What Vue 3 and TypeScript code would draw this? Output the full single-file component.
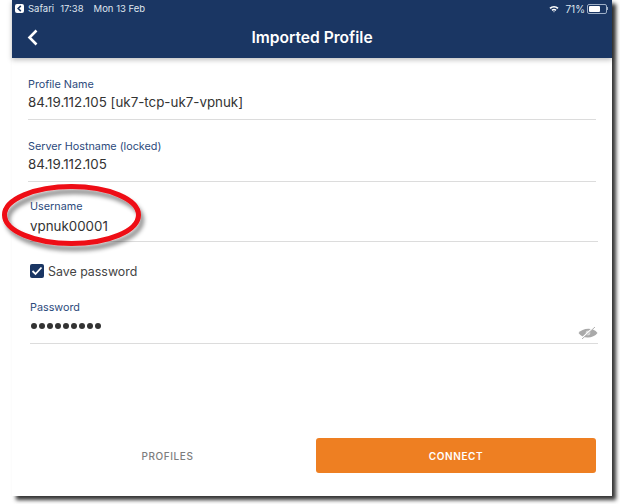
<script setup lang="ts">
const fields = [
  { label: 'Profile Name', value: '84.19.112.105 [uk7-tcp-uk7-vpnuk]' },
  { label: 'Server Hostname (locked)', value: '84.19.112.105' },
]
</script>

<template>
  <div class="stage">
    <div class="window">
      <header class="header">
        <div class="status">
          <div class="status-left">
            <span class="back-badge">
              <svg width="7" height="7" viewBox="0 0 8 8"><path d="M5.5 1 L2.5 4 L5.5 7" fill="none" stroke="#1a3663" stroke-width="1.8" /></svg>
            </span>
            <span>Safari</span><span class="time">17:38</span><span class="date">Mon 13 Feb</span>
          </div>
          <div class="status-right">
            <svg width="10" height="8" viewBox="0 0 12 9" class="wifi">
              <path d="M0.5 3 A8 8 0 0 1 11.5 3 L10 4.6 A6 6 0 0 0 2 4.6 Z M3 5.4 A4.5 4.5 0 0 1 9 5.4 L7.7 6.8 A2.6 2.6 0 0 0 4.3 6.8 Z M5 7.6 A1.5 1.5 0 0 1 7 7.6 L6 8.7 Z" fill="#fff" />
            </svg>
            <span class="pct">71%</span>
            <span class="battery"><span class="battery-fill"></span></span>
            <span class="nub"></span>
          </div>
        </div>
        <div class="nav">
          <svg class="chev" width="12" height="17" viewBox="0 0 12 17"><path d="M9.5 1.5 L2.5 8.5 L9.5 15.5" fill="none" stroke="#fff" stroke-width="2.6" /></svg>
          <h1 class="title">Imported Profile</h1>
        </div>
      </header>

      <main class="form">
        <div class="upper">
          <div v-for="f in fields" :key="f.label" class="field">
            <div class="label">{{ f.label }}</div>
            <div class="value">{{ f.value }}</div>
          </div>
        </div>
        <div class="lower">
          <div class="field">
            <div class="label">Username</div>
            <div class="value tall">vpnuk00001</div>
          </div>
          <div class="check-row">
            <span class="check">
              <svg width="12" height="10" viewBox="0 0 12 10"><path d="M1.5 5 L4.5 8 L10.5 1.5" fill="none" stroke="#fff" stroke-width="1.8" /></svg>
            </span>
            <span>Save password</span>
          </div>
          <div class="field pw">
            <div class="label">Password</div>
            <div class="dots">
              <span class="dot-row"><i v-for="n in 9" :key="n" class="dot"></i></span>
              <svg class="eye" width="20" height="12" viewBox="0 0 20 12">
                <path d="M0.5 6 C4 1 15 -0.5 19.5 6 C15.5 11.5 5 12.5 0.5 6 Z" fill="#a9a9a9" />
                <circle cx="10" cy="6" r="2.4" fill="#d8d8d8" />
                <path d="M3 12 L16 0" stroke="#fff" stroke-width="1.6" />
                <path d="M4 12 L17 0" stroke="#a9a9a9" stroke-width="0.9" />
              </svg>
            </div>
          </div>
        </div>
        <div class="actions">
          <button class="btn ghost" type="button">PROFILES</button>
          <button class="btn primary" type="button">CONNECT</button>
        </div>
      </main>
    </div>

    <svg class="ring" width="156" height="90" viewBox="0 0 156 90">
      <defs>
        <filter id="ring-shadow" x="-10%" y="-15%" width="125%" height="140%">
          <feDropShadow dx="3" dy="5" stdDeviation="2" flood-color="#000" flood-opacity="0.45" />
        </filter>
      </defs>
      <ellipse cx="71.5" cy="44" rx="67" ry="28.5" fill="none" stroke="#ee0a12" stroke-width="5" filter="url(#ring-shadow)" />
    </svg>
  </div>
</template>

<style>
html, body { margin: 0; background: #fff; }
</style>

<style scoped>
.stage {
  position: relative;
  width: 620px;
  height: 504px;
  overflow: hidden;
  background: #fff;
  font-family: Inter, "Liberation Sans", sans-serif;
}
.window {
  margin-left: 12px;
  width: 600px;
  height: 496px;
  display: flex;
  flex-direction: column;
  background: #fff;
  box-shadow: 4px 4px 4px rgba(0, 0, 0, 0.8);
}
.header {
  height: 58px;
  background: #1a3663;
  color: #fff;
  box-shadow: 0 2px 5px rgba(0, 0, 0, 0.25);
  flex: none;
}
.status {
  height: 17px;
  display: flex;
  justify-content: space-between;
  align-items: center;
  padding: 0 4px 0 3px;
  font-size: 9.5px;
  color: #dfe5ee;
}
.status-left, .status-right { display: flex; align-items: center; }
.back-badge {
  width: 9px;
  height: 9px;
  margin-right: 4px;
  border-radius: 2px;
  background: #fff;
  display: flex;
  align-items: center;
  justify-content: center;
}
.time { margin-left: 6px; }
.date { margin-left: 10px; }
.wifi { margin-right: 6px; }
.pct { font-size: 10px; margin-right: 2px; }
.battery {
  width: 16px;
  height: 6px;
  padding: 1px;
  border: 1px solid #9fb0c8;
  border-radius: 2px;
  display: block;
}
.battery-fill { display: block; width: 71%; height: 100%; background: #fff; border-radius: 1px; }
.nub { width: 1px; height: 3px; background: #9fb0c8; }
.nav {
  position: relative;
  height: 40px;
  display: flex;
  align-items: center;
  justify-content: center;
}
.chev { position: absolute; left: 15px; top: 12px; }
.title { margin: 0; font-size: 15.6px; font-weight: 600; }
.form { flex: 1; display: flex; flex-direction: column; color: #333; }
.upper { padding: 20px 16px 0 16px; display: flex; flex-direction: column; gap: 20px; }
.lower { padding: 18px 14px 0 18px; display: flex; flex-direction: column; }
.field { border-bottom: 1px solid #dcdcdc; height: 41px; }
.label { font-size: 10.8px; line-height: 13px; color: #2c4a7c; }
.value { font-size: 13.35px; line-height: 22px; color: #333; }
.value.tall { line-height: 26px; }
.check-row {
  margin-top: 20px;
  display: flex;
  align-items: center;
  gap: 4px;
  font-size: 12.4px;
  height: 18px;
  color: #444;
}
.check {
  width: 14px;
  height: 14px;
  border-radius: 2px;
  background: #1a3663;
  display: flex;
  align-items: center;
  justify-content: center;
}
.field.pw { margin-top: 21px; height: 42px; }
.dots { display: flex; align-items: center; justify-content: space-between; height: 24px; }
.dot-row { display: flex; gap: 2px; padding-left: 1px; }
.dot { width: 6px; height: 6px; border-radius: 50%; background: #333; }
.eye { margin-top: 14px; }
.actions {
  margin-top: auto;
  padding: 0 16px 23px 16px;
  display: flex;
  align-items: center;
  justify-content: space-between;
}
.btn {
  font-family: inherit;
  font-size: 10px;
  font-weight: 500;
  letter-spacing: 0.6px;
  height: 35px;
  border: 0;
  border-radius: 3px;
  padding: 0;
}
.ghost { width: 279px; background: transparent; color: #7d7d7d; }
.primary { width: 280px; background: #ee7f22; color: #fff; font-weight: 600; }
.ring { position: absolute; left: 0; top: 171px; }
</style>
